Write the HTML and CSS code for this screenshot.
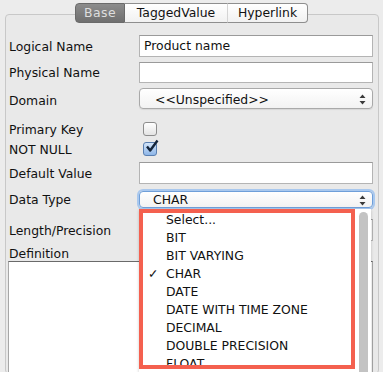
FILE: index.html
```html
<!DOCTYPE html>
<html lang="en">
<head>
  <meta charset="UTF-8" />
  <title>Column Properties</title>
  <link rel="stylesheet" href="styles.css">
</head>
<body>

<div class="tabs">
  <span class="tab tab-base active">Base</span>
  <span class="tab tab-tagged">TaggedValue</span>
  <span class="tab tab-link">Hyperlink</span>
</div>

<div class="panel">
  <div class="row row-logical">
    <span class="label">Logical Name</span>
    <div class="field">Product name</div>
  </div>
  <div class="row row-physical">
    <span class="label">Physical Name</span>
    <div class="field"></div>
  </div>
  <div class="row row-domain">
    <span class="label">Domain</span>
    <div class="select">
      <span class="select-text">&lt;&lt;Unspecified&gt;&gt;</span>
      <svg class="arrows" width="7" height="11" viewBox="0 0 7 11"><path d="M3.5 0.5 L6.5 4 L0.5 4 Z M0.5 7 L6.5 7 L3.5 10.5 Z" fill="#3a3a3a"/></svg>
    </div>
  </div>
  <div class="row row-pk">
    <span class="label">Primary Key</span>
    <span class="checkbox"></span>
  </div>
  <div class="row row-notnull">
    <span class="label">NOT NULL</span>
    <span class="checkbox checked">
      <svg width="16" height="16" viewBox="0 0 16 16"><path d="M3 7.5 L6.2 11.5 L13.5 1.5" fill="none" stroke="#14243a" stroke-width="2.4" stroke-linejoin="round"/></svg>
    </span>
  </div>
  <div class="row row-default">
    <span class="label">Default Value</span>
    <div class="field"></div>
  </div>
  <div class="row row-type">
    <span class="label">Data Type</span>
    <div class="select focused">
      <span class="select-text">CHAR</span>
      <svg class="arrows" width="7" height="11" viewBox="0 0 7 11"><path d="M3.5 0.5 L6.5 4 L0.5 4 Z M0.5 7 L6.5 7 L3.5 10.5 Z" fill="#3a3a3a"/></svg>

      <div class="popup">
        <ul class="options">
          <li><span class="mark"></span>Select...</li>
          <li><span class="mark"></span>BIT</li>
          <li><span class="mark"></span>BIT VARYING</li>
          <li><span class="mark">&#10003;</span>CHAR</li>
          <li><span class="mark"></span>DATE</li>
          <li><span class="mark"></span>DATE WITH TIME ZONE</li>
          <li><span class="mark"></span>DECIMAL</li>
          <li><span class="mark"></span>DOUBLE PRECISION</li>
          <li><span class="mark"></span>FLOAT</li>
        </ul>
        <div class="scroll-thumb"></div>
        <div class="callout"></div>
      </div>
    </div>
  </div>
  <div class="row row-length">
    <span class="label">Length/Precision</span>
    <div class="field"></div>
  </div>
  <div class="def-label">Definition</div>
  <div class="textarea"></div>
</div>

</body>
</html>
```

FILE: styles.css
```css
html, body {
  height: 100%;
  overflow: hidden;
}
body {
  margin: 0;
  background: #ececec;
  font-family: "DejaVu Sans", sans-serif;
  font-size: 12.4px;
  color: #111;
}
.tabs {
  display: flex;
  margin-left: 75px;
  padding-top: 3px;
  position: relative;
  z-index: 1;
}
.tab {
  height: 18px;
  line-height: 18px;
  text-align: center;
  border: 1px solid #8e8e8e;
  border-left: none;
  background: linear-gradient(#ffffff, #f1f1f1);
  color: #111;
}
.tab-base {
  width: 48px;
  border-left: 1px solid #7a7a7a;
  border-radius: 4px 0 0 4px;
  background: linear-gradient(#8c8c8c, #6f6f6f);
  border-color: #6a6a6a;
  color: #dedede;
  letter-spacing: 0.5px;
}
.tab-tagged {
  width: 102px;
  border-right: 1px solid #d4d4d4;
  border-top-color: #8e8e8e;
  border-bottom-color: #8e8e8e;
}
.tab-link {
  width: 79px;
  border-radius: 0 4px 4px 0;
}
.panel {
  margin: -9px 4px 0 5px;
  border: 1px solid #c8c8c8;
  border-radius: 4px;
  background: #e9e9e9;
  padding: 20px 5px 0 2px;
  height: 360px;
  box-sizing: border-box;
}
.row {
  display: flex;
  align-items: center;
}
.label {
  width: 131px;
  flex: none;
  padding-left: 1px;
  box-sizing: border-box;
}
.field {
  flex: 1;
  height: 22px;
  box-sizing: border-box;
  border: 1px solid #b4b4b4;
  border-top-color: #9a9a9a;
  background: #fff;
  padding-left: 4px;
  line-height: 20px;
}
.row-physical { margin-top: 5px; }
.row-physical .field { height: 21px; }
.row-domain { margin-top: 5px; }
.row-domain .label { padding-top: 3px; }
.row-pk { margin-top: 13px; height: 14px; }
.row-notnull { margin-top: 6px; height: 14px; }
.row-default { margin-top: 6px; }
.row-type { margin-top: 7px; }
.row-length { margin-top: 11px; }
.select {
  flex: 1;
  position: relative;
  height: 21px;
  box-sizing: border-box;
  border: 1px solid #a9a9a9;
  border-radius: 4px;
  background: linear-gradient(#ffffff, #f2f2f2);
  box-shadow: 0 1px 1px rgba(0, 0, 0, 0.08);
  display: flex;
  align-items: center;
  padding-left: 15px;
}
.row-domain .select-text { padding-top: 2px; }
.select.focused {
  height: 17px;
  border-color: #6f9fd9;
  box-shadow: 0 0 0 2px #a9c8ee;
  padding-left: 13px;
}
.arrows {
  position: absolute;
  right: 6px;
  top: 50%;
  margin-top: -5px;
}
.checkbox {
  width: 12px;
  height: 12px;
  margin-left: 4px;
  border: 1px solid #8d8d8d;
  border-radius: 3px;
  background: linear-gradient(#ffffff, #e4e4e4);
  position: relative;
}
.checkbox.checked {
  border-color: #5a7fb0;
  background: linear-gradient(#d3e5fa, #8eb6e8);
}
.checkbox svg {
  position: absolute;
  left: 0;
  top: -4px;
}
.def-label {
  margin-top: 5px;
  height: 15px;
  line-height: 15px;
  padding-left: 1px;
}
.textarea {
  height: 110px;
  background: #fff;
  border: 1px solid #a6a6a6;
  border-top-color: #6a6a6a;
}
.popup {
  position: absolute;
  left: -1px;
  top: 17px;
  width: 232px;
  height: 164px;
  overflow: hidden;
  background: #fff;
  z-index: 5;
  box-shadow: 0 1px 3px rgba(0, 0, 0, 0.2);
}
.options {
  list-style: none;
  margin: 0;
  padding: 2px 0 0 0;
  color: #111;
}
.options li {
  display: flex;
  height: 18px;
  line-height: 18px;
}
.mark {
  width: 27px;
  flex: none;
  padding-left: 9px;
  box-sizing: border-box;
}
.scroll-thumb {
  position: absolute;
  right: 3px;
  top: 3px;
  width: 9px;
  height: 200px;
  border-radius: 5px;
  background: #c3c3c3;
}
.callout {
  position: absolute;
  left: 0;
  top: 0;
  width: 216px;
  height: 160px;
  box-sizing: border-box;
  border: 4px solid #f4604f;
}
```
